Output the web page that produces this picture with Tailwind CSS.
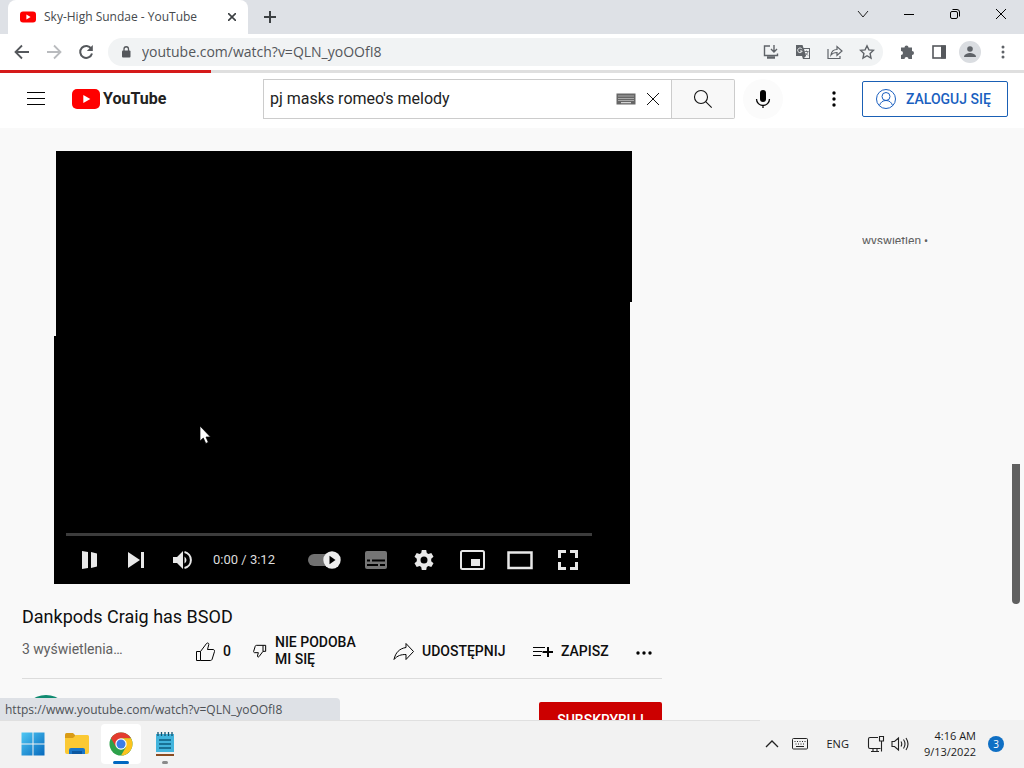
<!DOCTYPE html>
<html lang="pl">
<head>
  <meta charset="UTF-8" />
  <title>Sky-High Sundae - YouTube</title>
  <meta name="viewport" content="width=device-width, initial-scale=1.0" />
  <script src="https://cdn.jsdelivr.net/npm/@tailwindcss/browser@4"></script>
</head>
<body class="flex h-screen flex-col overflow-hidden bg-[#f9f9f9] font-['Roboto',sans-serif] text-[#0f0f0f]">

  <!-- Tab strip -->
  <header class="flex h-[34px] shrink-0 items-stretch bg-[#dee1e6] font-['Open_Sans',sans-serif]">
    <div class="ml-2 flex w-60 items-center rounded-t-lg bg-white pl-3 pr-2">
      <svg class="mr-2 h-4 w-4 shrink-0" viewBox="0 0 16 16"><rect y="2.5" width="16" height="11" rx="3" fill="#f00"/><path d="M6.4 5.6v4.8L10.6 8z" fill="#fff"/></svg>
      <span class="flex-1 whitespace-nowrap text-xs text-[#45494d]">Sky-High Sundae - YouTube</span>
      <button aria-label="Close tab" class="flex h-4 w-4 items-center justify-center"><svg class="h-2 w-2" viewBox="0 0 8 8" stroke="#3c4043" stroke-width="1.6"><path d="M0 0l8 8M8 0L0 8"/></svg></button>
    </div>
    <button aria-label="New tab" class="ml-4 flex items-center"><svg class="h-3 w-3" viewBox="0 0 12 12" stroke="#3c4043" stroke-width="2"><path d="M6 0v12M0 6h12"/></svg></button>
    <div class="ml-auto flex items-start">
      <button aria-label="Search tabs" class="flex h-7 w-[46px] items-center justify-center"><svg class="h-3 w-3" viewBox="0 0 12 12" fill="none" stroke="#222"><path d="M1 3l5 6 5-6"/></svg></button>
      <button aria-label="Minimize" class="flex h-7 w-[46px] items-center justify-center"><svg class="h-3 w-3" viewBox="0 0 12 12" stroke="#000"><path d="M1 6.5h10"/></svg></button>
      <button aria-label="Restore" class="flex h-7 w-[46px] items-center justify-center"><svg class="h-3 w-3" viewBox="0 0 12 12" fill="none" stroke="#000"><rect x="1.5" y="3.5" width="7" height="7" rx="1.5"/><path d="M3.5 1.5H8q2.500 0 2.500 2.500v4.500"/></svg></button>
      <button aria-label="Close" class="flex h-7 w-[46px] items-center justify-center"><svg class="h-3 w-3" viewBox="0 0 12 12" stroke="#000"><path d="M1 1l10 10M11 1L1 11"/></svg></button>
    </div>
  </header>

  <!-- Toolbar -->
  <div class="flex h-9 shrink-0 items-center gap-4 bg-white pl-3 pr-[15px] font-['Open_Sans',sans-serif]">
    <button aria-label="Back"><svg class="h-5 w-5" viewBox="0 0 20 20" fill="none" stroke="#55585c" stroke-width="1.8"><path d="M17 10H4M10 3.5L3.5 10l6.5 6.5"/></svg></button>
    <button aria-label="Forward" class="-ml-1"><svg class="h-5 w-5" viewBox="0 0 20 20" fill="none" stroke="#b9bbbe" stroke-width="1.8"><path d="M3 10h13M10 3.5l6.5 6.5-6.5 6.5"/></svg></button>
    <button aria-label="Reload" class="-ml-1"><svg class="h-5 w-5" viewBox="0 0 20 20"><path d="M15.3 6.7A6 6 0 1 0 16 11.5" fill="none" stroke="#55585c" stroke-width="2"/><path d="M16.8 3v6h-6z" fill="#55585c"/></svg></button>
    <div class="-ml-1 flex h-7 flex-1 items-center rounded-full bg-[#f1f3f4] pl-2 pr-2">
      <svg class="ml-1 mr-[10px] h-3 w-3 shrink-0" viewBox="0 0 12 12"><rect x="2" y="4.5" width="8.5" height="7" rx="1" fill="#55585c"/><path d="M4 5V3a2.200 2.200 0 0 1 4.500 0v2" fill="none" stroke="#55585c" stroke-width="1.3"/></svg>
      <input aria-label="Address" class="min-w-0 flex-1 bg-transparent text-sm text-[#54575b] outline-none" value="youtube.com/watch?v=QLN_yoOOfI8" />
      <div class="flex items-center gap-4">
        <button aria-label="Install"><svg class="h-4 w-4" viewBox="0 0 16 16" fill="none" stroke="#5f6368" stroke-width="1.4"><path d="M7 2H1.500v9.500h13V9.500M11 1v6.500M8 5l3 3 3-3"/><path d="M4 13.500h8" stroke-width="2.500"/></svg></button>
        <button aria-label="Translate"><svg class="h-4 w-4" viewBox="0 0 16 16"><path d="M1 1h6.500l1 3H15v11H8l-1-3H1z" fill="#5f6368"/><path d="M9 5l2 7-2 2h5V5z" fill="#f1f3f4"/><path d="M7 5.200A2.300 2.300 0 1 0 7.200 7H5" fill="none" stroke="#f1f3f4"/><path d="M9.500 7.500h4M11.500 6.500v1M13 7.500c-.5 2-1.500 3-3 4M10.500 9l2.500 2.500" fill="none" stroke="#5f6368" stroke-width=".8"/></svg></button>
        <button aria-label="Share page"><svg class="h-4 w-4" viewBox="0 0 16 16" fill="none" stroke="#5f6368" stroke-width="1.2"><path d="M1 5v9.500h12V12M4 11c.5-4 3-5.500 6-5.500V2.500l5 4.500-5 4.500V8.500c-3 0-4.500.5-6 2.500z"/></svg></button>
        <button aria-label="Bookmark"><svg class="h-4 w-4" viewBox="0 0 16 16" fill="none" stroke="#5f6368" stroke-width="1.4"><path d="M8 1.800l1.900 4.100 4.500.5-3.300 3.100.9 4.500L8 11.700 4 14l.9-4.500L1.600 6.400l4.500-.5z"/></svg></button>
      </div>
    </div>
    <div class="flex items-center gap-4">
      <button aria-label="Extensions"><svg class="h-4 w-4" viewBox="0 0 16 16" fill="#5f6368"><path d="M2 3.500h3.500a2 2 0 1 1 4 0H13V7a2 2 0 1 1 0 4v4H9.500a2 2 0 1 0-4 0H2v-4a2 2 0 1 0 0-4z"/></svg></button>
      <button aria-label="Side panel"><svg class="h-4 w-4" viewBox="0 0 16 16"><rect x="2" y="2" width="12" height="12" fill="#fff" stroke="#55585c" stroke-width="1.6"/><path d="M10 1.500h5v13h-5z" fill="#55585c"/></svg></button>
      <button aria-label="Profile" class="-mx-1 flex h-[22px] w-[22px] items-center justify-center rounded-full bg-[#dadde1]"><svg class="h-4 w-4" viewBox="0 0 16 16" fill="#5f6368"><circle cx="8" cy="5" r="2.8"/><path d="M2 13c0-3 4-4 6-4s6 1 6 4z"/></svg></button>
      <button aria-label="Menu" class="-mr-1"><svg class="h-5 w-5" viewBox="0 0 20 20" fill="#5f6368"><circle cx="10" cy="5" r="1.5"/><circle cx="10" cy="10" r="1.5"/><circle cx="10" cy="15" r="1.5"/></svg></button>
    </div>
  </div>

  <!-- Page load progress -->
  <div class="h-[3px] shrink-0 bg-[#dfdfdf]"><div class="h-full bg-[#d51a1a]" style="width: 20.6%"></div></div>

  <!-- Masthead -->
  <div class="flex h-[55px] shrink-0 items-center bg-white pb-1 pl-6 pr-4">
    <button aria-label="Przewodnik"><svg class="h-6 w-6" viewBox="0 0 24 24" stroke="#030303"><path d="M3 5.500h18M3 11.500h18M3 17.500h18"/></svg></button>
    <a href="#" class="ml-6 flex items-center">
      <svg class="h-5 w-7" viewBox="0 0 28 20"><rect width="28" height="20" rx="5" fill="#f00"/><path d="M11.300 6v8l7-4z" fill="#fff"/></svg>
      <span class="ml-[3px] text-base leading-5 font-bold text-[#212121]">YouTube</span>
    </a>
    <form class="ml-auto flex h-10 w-[472px]">
      <div class="flex flex-1 items-center border border-[#ccc] pl-[6px] pr-3">
        <input aria-label="Szukaj" class="min-w-0 flex-1 bg-transparent text-base text-[#222] outline-none" value="pj masks romeo's melody" />
        <svg class="h-3 w-5" viewBox="0 0 20 12"><rect x=".5" y=".5" width="19" height="11" fill="#666"/><path d="M2.500 3h15M2.500 5.500h15M2.500 7.500h15" stroke="#eee" stroke-width="1.2" stroke-dasharray="1 1"/><path d="M5 9.700h10" stroke="#eee"/></svg>
        <button type="button" aria-label="Wyczyść" class="ml-[11px]"><svg class="h-3 w-3" viewBox="0 0 12 12" stroke="#111"><path d="M0 0l12 12M12 0L0 12"/></svg></button>
      </div>
      <button type="button" aria-label="Szukaj" class="flex w-[63px] items-center justify-center rounded-r-xs border border-l-0 border-[#ccc] bg-[#f8f8f8]"><svg class="h-6 w-6" viewBox="0 0 24 24" fill="none" stroke="#111" stroke-width="1.1"><circle cx="10" cy="10" r="6.5"/><path d="M14.700 14.700l6 6"/></svg></button>
    </form>
    <button aria-label="Wyszukiwanie głosowe" class="ml-2 flex h-10 w-10 items-center justify-center rounded-full bg-[#fbfbfb]"><svg class="h-6 w-6" viewBox="0 0 24 24"><rect x="9" y="3" width="6" height="12" rx="3" fill="#030303"/><path d="M5.500 12a6.500 6.500 0 0 0 13 0M12 18v3" fill="none" stroke="#030303" stroke-width="1.3"/></svg></button>
    <button aria-label="Ustawienia" class="ml-[39px]"><svg class="h-6 w-6" viewBox="0 0 24 24" fill="#030303"><circle cx="12" cy="6" r="1.7"/><circle cx="12" cy="12" r="1.7"/><circle cx="12" cy="18" r="1.7"/></svg></button>
    <a href="#" class="ml-4 flex h-9 w-[146px] items-center gap-2 rounded-xs border border-[#1a60b5] pl-[11px] whitespace-nowrap text-sm font-medium text-[#1a5fc0]">
      <svg class="h-6 w-6" viewBox="0 0 24 24" fill="none" stroke="#1a5fc0"><circle cx="12" cy="12" r="9.5"/><circle cx="12" cy="9.5" r="4"/><path d="M5.500 18.500c1-3.500 3.500-5 6.500-5s5.500 1.500 6.500 5"/></svg>
      ZALOGUJ SIĘ
    </a>
  </div>

  <!-- Watch page -->
  <main class="relative flex min-h-0 flex-1 overflow-hidden">
    <div class="flex-1 pl-[22px] pt-[23px]">
      <div class="ml-[34px] mr-[30px] h-[151px] bg-black"></div>
      <div class="ml-[34px] mr-8 h-[34px] bg-black"></div>
      <div class="mx-8 flex h-[248px] flex-col justify-end bg-black px-3">
        <div class="mr-[26px] h-[3px] bg-[#3c3c3c]"></div>
        <div class="mr-[26px] flex h-12 items-center">
          <button aria-label="Wstrzymaj" class="flex w-[47px] justify-center"><svg class="h-5 w-5" viewBox="0 0 20 20" fill="#e8e8e8"><path d="M2 1l6 1v16l-6 1zM11 2l6 1.500v13L11 18z"/></svg></button>
          <button aria-label="Następny" class="flex w-[46px] justify-center"><svg class="h-5 w-5" viewBox="0 0 20 20" fill="#e8e8e8"><path d="M2 2l12 8-12 8zM15 2h3v16h-3z"/></svg></button>
          <button aria-label="Wycisz" class="flex w-[46px] justify-center"><svg class="h-5 w-5" viewBox="0 0 20 20"><path d="M1 7h4l6-6v18l-6-6H1z" fill="#e8e8e8"/><path d="M12.500 6.500q2 1.500 2 3.500t-2 3.500z" fill="#e8e8e8"/><path d="M12.500 2a8.200 8.200 0 0 1 0 16" fill="none" stroke="#e8e8e8" stroke-width="2"/></svg></button>
          <span class="ml-2 whitespace-nowrap text-[13px] text-[#ddd]">0:00 / 3:12</span>
          <div class="ml-auto flex items-center">
            <button aria-label="Autoodtwarzanie" class="flex w-12 justify-center"><svg class="h-5 w-9" viewBox="0 0 36 20"><rect x="2" y="4" width="26" height="12" rx="6" fill="#717171"/><circle cx="26" cy="10" r="8.7" fill="#eee"/><path d="M23.500 5.800v8.400l6-4.200z"/></svg></button>
            <button aria-label="Napisy" class="ml-1 flex w-12 justify-center"><svg class="h-5 w-6" viewBox="0 0 24 20"><rect x="1" y="1" width="22" height="18" rx="2" fill="#757575"/><path d="M3 10.500h3M8 10.500h13M3 15h11M16 15h5" stroke="#000" stroke-width="2"/></svg></button>
            <button aria-label="Ustawienia odtwarzacza" class="flex w-12 justify-center"><svg class="h-6 w-6" viewBox="0 0 24 24" fill="#e8e8e8"><path fill-rule="evenodd" d="M9.800 2h4.400l.6 3 1.600 1 2.900-1 2.200 3.800-2.300 2v2.400l2.300 2-2.200 3.800-2.900-1-1.600 1-.6 3H9.800l-.6-3-1.600-1-2.900 1-2.200-3.800 2.300-2v-2.400l-2.300-2L4.700 5l2.900 1 1.600-1zM12 8.500a3.500 3.500 0 1 0 0 7 3.500 3.500 0 1 0 0-7z"/></svg></button>
            <button aria-label="Miniodtwarzacz" class="flex w-12 justify-center"><svg class="h-6 w-7" viewBox="0 0 28 24"><rect x="3" y="3" width="23" height="18" rx="1.5" fill="none" stroke="#e8e8e8" stroke-width="2"/><path d="M13 11h9v7h-9z" fill="#e8e8e8"/></svg></button>
            <button aria-label="Tryb kinowy" class="flex w-12 justify-center"><svg class="h-6 w-7" viewBox="0 0 28 24"><rect x="2.5" y="4.500" width="23" height="15.5" fill="none" stroke="#e8e8e8" stroke-width="2.5"/></svg></button>
            <button aria-label="Pełny ekran" class="flex w-12 justify-center"><svg class="h-6 w-6" viewBox="0 0 24 24" fill="none" stroke="#e8e8e8" stroke-width="3"><path d="M3.500 10V3.500H10M14 3.500h6.500V10M20.500 14v6.500H14M10 20.500H3.500V14"/></svg></button>
          </div>
        </div>
      </div>

      <h1 class="mt-5 text-lg leading-[26px]">Dankpods Craig has BSOD</h1>
      <div class="flex h-[49px] items-center border-b border-[#dcdcdc] pb-[6px] whitespace-nowrap text-sm font-medium">
        <span class="w-[171px] pb-1 font-normal text-[#606060]">3 wyświetlenia…</span>
        <button class="flex items-center gap-[6px]"><svg class="h-6 w-6" viewBox="0 0 24 24" fill="none" stroke="#030303"><path d="M3.500 12.500h4v9h-4zM7.500 12.500l6-8c1-1 2.500-.5 2.300 1l-1.300 5h5.500c1.200 0 1.800 1 1.500 2l-2.300 7.500c-.3 1-.9 1.500-2 1.500H7.500"/></svg>0</button>
        <button class="ml-[21px] flex items-center gap-[7px] text-left leading-[17px]"><svg class="h-4 w-4" viewBox="0 0 24 24" fill="none" stroke="#030303" stroke-width="1.5"><path d="M20.500 12.500h-4v-9h4zM16.500 12.500l-6 8c-1 1-2.500.5-2.300-1l1.300-5H4c-1.200 0-1.800-1-1.500-2L4.800 5c.3-1 .9-1.500 2-1.500h9.700"/></svg><span>NIE PODOBA<br>MI SIĘ</span></button>
        <button class="ml-auto flex w-[119px] items-center gap-[6px]"><svg class="h-6 w-6" viewBox="0 0 24 24" fill="none" stroke="#030303"><path d="M14 4.500l7.500 8-7.500 8v-5c-5 0-8.500 1-12 5 1.500-7 5.500-11 12-12z"/></svg>UDOSTĘPNIJ</button>
        <button class="ml-5 flex w-[81px] items-center gap-[6px]"><svg class="h-6 w-6" viewBox="0 0 24 24" fill="none" stroke="#030303"><path d="M2 8.500h12M2 12.500h9M2 16.500h8"/><path d="M11.500 13H22M17 8v10" stroke-width="2"/></svg>ZAPISZ</button>
        <button aria-label="Więcej" class="ml-5 mr-[6px]"><svg class="h-6 w-6" viewBox="0 0 24 24" fill="#030303"><circle cx="6" cy="14" r="1.7"/><circle cx="12" cy="14" r="1.7"/><circle cx="18" cy="14" r="1.7"/></svg></button>
      </div>
      <div class="mt-4 flex items-start justify-between">
        <div class="h-12 w-12 rounded-full bg-[#0f8a70]"></div>
        <button class="mt-[7px] h-9 w-[123px] rounded-xs bg-[#c00] text-sm font-medium text-white">SUBSKRYBUJ</button>
      </div>
    </div>

    <aside class="w-[362px] shrink-0 pl-[200px] pt-[109px]">
      <div class="flex h-[7px] items-center overflow-hidden text-xs text-[#606060]">wyświetleń •</div>
    </aside>

    <!-- Scrollbar thumb -->
    <div class="absolute right-1 top-[336px] h-[140px] w-2 rounded-b-sm bg-[#606060]"></div>
    <!-- Link target bubble -->
    <div class="absolute bottom-0 left-0 h-[22px] w-[340px] rounded-tr-sm bg-[#dee1e6] pl-[5px] text-xs leading-6 text-[#4d5156] font-['Open_Sans',sans-serif]">https://www.youtube.com/watch?v=QLN_yoOOfI8</div>
    <!-- Mouse pointer -->
    <svg class="absolute left-[199px] top-[297px] h-5 w-3" viewBox="0 0 12 20"><path d="M1 1v15l3.300-3 2.500 5.500 2.500-1.200L7 12h4.500z" fill="#fff" stroke="#000" stroke-width=".7"/></svg>
  </main>

  <!-- Taskbar -->
  <footer class="relative flex h-12 shrink-0 items-center bg-[#f2f2f2] pl-[13px] pr-5 text-[11px] text-[#1b1b1b] font-['Open_Sans',sans-serif]">
    <div class="absolute left-0 top-0 h-px w-[760px] bg-[#e0e0e0]"></div>
    <button aria-label="Start" class="flex h-10 w-10 items-center justify-center"><svg class="h-6 w-6" viewBox="0 0 24 24"><defs><linearGradient id="win" x2="1" y2="1"><stop stop-color="#4fc8f4"/><stop offset="1" stop-color="#0669bd"/></linearGradient></defs><path d="M.5.500h11v11H.5zM12.500.500h11v11h-11zM.5 12.500h11v11H.5zM12.500 12.500h11v11h-11z" fill="url(#win)"/></svg></button>
    <button aria-label="File Explorer" class="ml-1 flex h-10 w-10 items-center justify-center"><svg class="h-6 w-6" viewBox="0 0 24 24"><path d="M0 2.500Q0 1 1.500 1H8l3 3v6H0z" fill="#d99b16"/><path d="M0 6h8l3-3h11.500Q24 3 24 4.500V20q0 2-2 2H2q-2 0-2-2z" fill="#fbc934"/><path d="M4 22v-4q0-2 2-2h12q2 0 2 2v4z" fill="#1976c9"/><path d="M7 19h10v3H7z" fill="#0c57a0"/></svg></button>
    <button aria-label="Google Chrome" class="relative ml-1 flex h-10 w-10 items-center justify-center rounded-sm bg-white">
      <svg class="h-6 w-6" viewBox="0 0 24 24"><circle cx="12" cy="12" r="11.5" fill="#2da14a"/><path d="M2 6.300A11.500 11.500 0 0 1 22 6.300H12L7 15z" fill="#e33b2e"/><path d="M22 6.300A11.500 11.500 0 0 1 12 23.500L17 14.900 16.500 8.500 12 6.300z" fill="#fcc31e"/><circle cx="12" cy="12" r="5.7" fill="#fff"/><circle cx="12" cy="12" r="4.5" fill="#3b7de8"/></svg>
      <span class="absolute bottom-0 h-[3px] w-4 rounded-full bg-[#0067c0]"></span>
    </button>
    <button aria-label="Notepad" class="relative ml-1 flex h-10 w-10 items-center justify-center">
      <svg class="h-6 w-5" viewBox="0 0 20 24"><path d="M1 2h18v18H1z" fill="#42b4dc"/><path d="M1 22h18v2H1z" fill="#8a4b20"/><path d="M1 20h18v2H1z" fill="#eee"/><path d="M3 0v4M6.500 0v4M10 0v4M13.500 0v4M17 0v4" stroke="#14536f" stroke-width="1.3"/><path d="M4 8h12M4 12h12M4 16h12" stroke="#0d5b7d" stroke-width="1.5"/></svg>
      <span class="absolute bottom-0 h-[3px] w-[6px] rounded-full bg-[#8a8a8a]"></span>
    </button>

    <button aria-label="Hidden icons" class="ml-auto"><svg class="h-4 w-4" viewBox="0 0 16 16" fill="none" stroke="#222" stroke-width="1.3"><path d="M2 11l6-6 6 6"/></svg></button>
    <button aria-label="Touch keyboard" class="ml-3"><svg class="h-4 w-4" viewBox="0 0 16 16" fill="none" stroke="#222"><rect x=".5" y="2.5" width="15" height="10.5" rx="1"/><path d="M2.500 5.500h11M3.500 8h9" stroke-dasharray="1 1.5"/><path d="M4 10.500h8"/></svg></button>
    <button class="ml-[18px]">ENG</button>
    <button aria-label="Network and volume" class="ml-[18px] flex items-center gap-[6px]">
      <svg class="h-[18px] w-[18px]" viewBox="0 0 18 18" fill="none" stroke="#222" stroke-width="1.1"><path d="M11 2.500H3q-1.500 0-1.500 1.500v8q0 1.500 1.500 1.500h10.500M6 13.500v3M10 13.500v3M4 16.500h8M12.500 1.500h4V6h-4zM14.500 6v10.500"/></svg>
      <svg class="h-[18px] w-[18px]" viewBox="0 0 18 18" fill="none" stroke="#222" stroke-width="1.1"><path d="M1 6.500h2.500L7.500 3v12l-4-3.500H1zM10 6.500q1.500 2.500 0 5M12.500 4.500q3 4.500 0 9M15 3q4 6 0 12"/></svg>
    </button>
    <button class="ml-[15px] text-right leading-4">4:16 AM<br>9/13/2022</button>
    <span class="ml-3 flex h-4 w-4 items-center justify-center rounded-full bg-[#0f6fc4] text-[10px] text-white">3</span>
  </footer>
</body>
</html>
